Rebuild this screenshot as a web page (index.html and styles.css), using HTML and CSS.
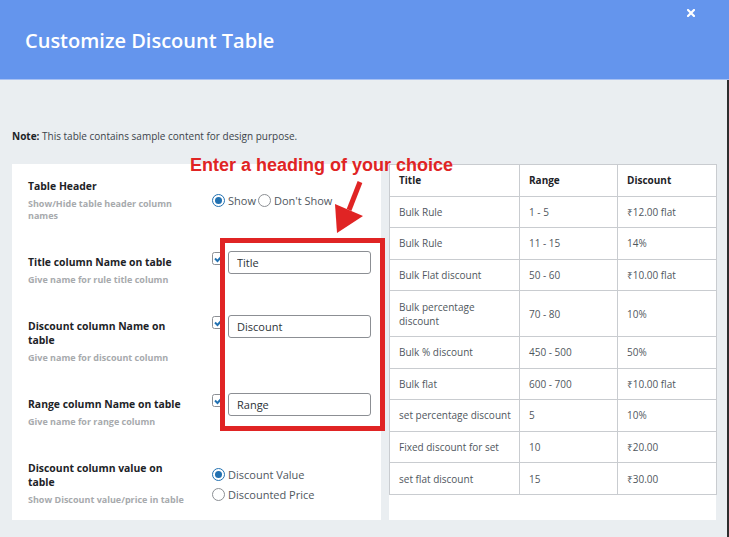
FILE: index.html
```html
<!DOCTYPE html>
<html lang="en">
<head>
<meta charset="utf-8">
<title>Customize Discount Table</title>
<link rel="stylesheet" href="styles.css">
</head>
<body>
<div class="modal">
  <header class="modal-header">
    <h1>Customize Discount Table</h1>
    <button class="close" aria-label="Close">
      <svg width="8" height="8" viewBox="0 0 8 8"><path d="M1 1L7 7M7 1L1 7" stroke="#fff" stroke-width="2.2" stroke-linecap="square"/></svg>
    </button>
  </header>
  <div class="modal-body">
    <p class="note"><b>Note:</b> This table contains sample content for design purpose.</p>
    <div class="columns">
      <div class="panel settings">
        <div class="row row-center">
          <div class="label">
            <div class="label-title">Table Header</div>
            <div class="label-desc">Show/Hide table header column names</div>
          </div>
          <div class="control inline">
            <label class="radio"><input type="radio" name="th" checked><span>Show</span></label>
            <label class="radio"><input type="radio" name="th"><span>Don't Show</span></label>
          </div>
        </div>
        <div class="row">
          <div class="label">
            <div class="label-title">Title column Name on table</div>
            <div class="label-desc">Give name for rule title column</div>
          </div>
          <div class="control field">
            <span class="check"><svg width="13" height="13" viewBox="0 0 13 13"><rect x="0.5" y="0.5" width="12" height="12" rx="2" fill="#fff" stroke="#8c8f94"/><path d="M3 6.5L5.5 9L10 4" fill="none" stroke="#2271b1" stroke-width="2"/></svg></span>
            <input class="text" type="text" value="Title">
          </div>
        </div>
        <div class="row">
          <div class="label">
            <div class="label-title">Discount column Name on table</div>
            <div class="label-desc">Give name for discount column</div>
          </div>
          <div class="control field">
            <span class="check"><svg width="13" height="13" viewBox="0 0 13 13"><rect x="0.5" y="0.5" width="12" height="12" rx="2" fill="#fff" stroke="#8c8f94"/><path d="M3 6.5L5.5 9L10 4" fill="none" stroke="#2271b1" stroke-width="2"/></svg></span>
            <input class="text" type="text" value="Discount">
          </div>
        </div>
        <div class="row">
          <div class="label">
            <div class="label-title">Range column Name on table</div>
            <div class="label-desc">Give name for range column</div>
          </div>
          <div class="control field">
            <span class="check"><svg width="13" height="13" viewBox="0 0 13 13"><rect x="0.5" y="0.5" width="12" height="12" rx="2" fill="#fff" stroke="#8c8f94"/><path d="M3 6.5L5.5 9L10 4" fill="none" stroke="#2271b1" stroke-width="2"/></svg></span>
            <input class="text" type="text" value="Range">
          </div>
        </div>
        <div class="row row-center">
          <div class="label">
            <div class="label-title">Discount column value on table</div>
            <div class="label-desc">Show Discount value/price in table</div>
          </div>
          <div class="control stacked">
            <label class="radio"><input type="radio" name="dv" checked><span>Discount Value</span></label>
            <label class="radio"><input type="radio" name="dv"><span>Discounted Price</span></label>
          </div>
        </div>
      </div>
      <div class="panel preview">
        <table class="discount-table">
          <colgroup><col class="c1"><col class="c2"><col class="c3"></colgroup>
          <thead>
            <tr><th>Title</th><th>Range</th><th>Discount</th></tr>
          </thead>
          <tbody>
            <tr><td>Bulk Rule</td><td>1 - 5</td><td>₹12.00 flat</td></tr>
            <tr><td>Bulk Rule</td><td>11 - 15</td><td>14%</td></tr>
            <tr><td>Bulk Flat discount</td><td>50 - 60</td><td>₹10.00 flat</td></tr>
            <tr><td>Bulk percentage discount</td><td>70 - 80</td><td>10%</td></tr>
            <tr><td>Bulk % discount</td><td>450 - 500</td><td>50%</td></tr>
            <tr><td>Bulk flat</td><td>600 - 700</td><td>₹10.00 flat</td></tr>
            <tr><td class="nowrap">set percentage discount</td><td>5</td><td>10%</td></tr>
            <tr><td>Fixed discount for set</td><td>10</td><td>₹20.00</td></tr>
            <tr><td>set flat discount</td><td>15</td><td>₹30.00</td></tr>
          </tbody>
        </table>
      </div>
    </div>
  </div>
  <div class="annot-text">Enter a heading of your choice</div>
  <div class="annot-box"></div>
  <svg class="annot-arrow" width="729" height="537" viewBox="0 0 729 537">
    <line x1="360" y1="182" x2="349" y2="210" stroke="#e02424" stroke-width="5"/>
    <polygon points="337,233 335,204 363,216" fill="#e02424"/>
  </svg>
</div>
</body>
</html>
```

FILE: styles.css
```css
* { box-sizing: border-box; }
html, body { margin: 0; padding: 0; }
body {
  width: 729px;
  height: 537px;
  overflow: hidden;
  background: #eaeef1;
  font-family: "Open Sans", "Noto Sans", sans-serif;
  color: #3c434a;
}
.modal { position: relative; width: 729px; height: 537px; }
.modal-header {
  height: 80px;
  background: #6495ed;
  border-bottom: 1px solid #a8c1f3;
  display: flex;
  align-items: center;
  padding: 3px 0 0 25px;
}
.modal-header h1 {
  margin: 0;
  color: #fff;
  font-size: 20px;
  font-weight: 600;
  line-height: 24px;
}
.close {
  position: absolute;
  top: 7px;
  left: 685px;
  width: 12px;
  height: 12px;
  padding: 0;
  border: 0;
  background: none;
  display: flex;
  align-items: center;
  justify-content: center;
}
.modal-body {
  height: 457px;
  padding: 0 12px;
  border-right: 2px solid #2e2e2e;
}
.note {
  margin: 0;
  padding-top: 49px;
  font-size: 10px;
  line-height: 14px;
  color: #3c434a;
}
.note b { color: #1d2327; }
.columns {
  margin-top: 21px;
  display: grid;
  grid-template-columns: 369px 327px;
  column-gap: 8px;
  height: 356px;
}
.panel { background: #fff; }
.settings {
  padding: 15px 9px 0 16px;
  display: flex;
  flex-direction: column;
  gap: 33px;
}
.row {
  display: grid;
  grid-template-columns: 160px 160px;
  column-gap: 24px;
  align-items: start;
}
.row-center { align-items: center; }
.label-title {
  font-size: 10.4px;
  font-weight: 700;
  line-height: 14px;
  color: #1d2327;
  margin-bottom: 5px;
}
.label-desc {
  font-size: 9px;
  font-weight: 700;
  line-height: 12px;
  color: #a7aaad;
}
.control { font-size: 11px; color: #50575e; }
.inline { display: flex; align-items: center; gap: 2px; }
.stacked { display: flex; flex-direction: column; padding-top: 2px; }
.radio {
  display: flex;
  align-items: center;
  gap: 3px;
  line-height: 20px;
}
.radio input {
  appearance: none;
  -webkit-appearance: none;
  margin: 0;
  width: 13px;
  height: 13px;
  border: 1px solid #8c8f94;
  border-radius: 50%;
  background: #fff;
  position: relative;
}
.radio input:checked { border-color: #2271b1; }
.radio input:checked::before {
  content: "";
  position: absolute;
  left: 2px;
  top: 2px;
  width: 7px;
  height: 7px;
  border-radius: 50%;
  background: #2271b1;
}
.field {
  display: flex;
  align-items: flex-start;
  gap: 3px;
  margin-top: -4px;
}
.check { display: block; margin-top: 1px; line-height: 0; }
.text {
  width: 143px;
  height: 23px;
  border: 1px solid #8c8f94;
  border-radius: 3px;
  padding: 0 8px;
  font-family: inherit;
  font-size: 11px;
  color: #2c3338;
  background: #fff;
}
.discount-table {
  width: 327px;
  border-collapse: collapse;
  table-layout: fixed;
  font-size: 10px;
  color: #50575e;
}
.c1 { width: 130px; }
.c2 { width: 98px; }
.c3 { width: 99px; }
.discount-table th,
.discount-table td {
  border: 1px solid #c9ccd0;
  padding: 8.3px 9px;
  line-height: 14px;
  text-align: left;
  vertical-align: middle;
}
.discount-table td.nowrap { white-space: nowrap; padding-right: 2px; }
.discount-table th { font-weight: 700; color: #1d2327; }
.annot-text {
  position: absolute;
  left: 190px;
  top: 155px;
  font-family: "Liberation Sans", Arial, sans-serif;
  font-weight: 700;
  font-size: 18px;
  line-height: 20px;
  color: #e02424;
  white-space: nowrap;
}
.annot-box {
  position: absolute;
  left: 220px;
  top: 238px;
  width: 165px;
  height: 193px;
  border: 5px solid #e02424;
}
.annot-arrow { position: absolute; left: 0; top: 0; pointer-events: none; }
```
